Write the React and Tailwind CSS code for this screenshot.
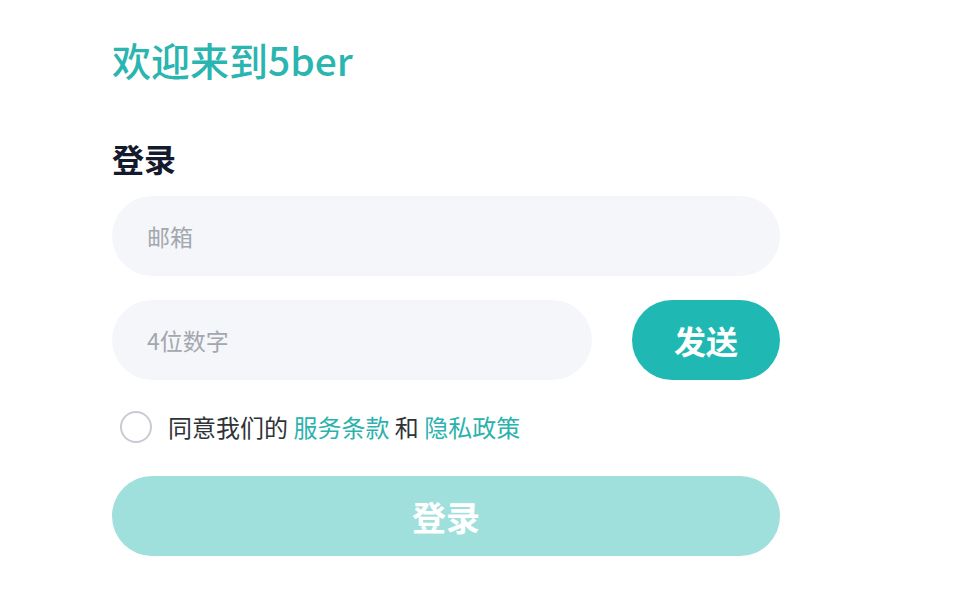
const App = () => {
  return (
    <div
      className="min-h-screen bg-white pl-[112px] pt-[35px]"
      style={{ fontFamily: '"Noto Sans CJK SC", "Noto Sans", sans-serif' }}
    >
      <div className="w-[668px]">
        <h1 className="text-[39px] leading-[48px] font-medium text-[#2ab5b0]">
          欢迎来到5ber
        </h1>

        <h2 className="mt-[55px] text-[32px] leading-[40px] font-bold text-[#141a2e]">
          登录
        </h2>

        {/* 邮箱 */}
        <input
          placeholder="邮箱"
          className="mt-[18px] block h-20 w-full rounded-full bg-[#f4f6fa] px-[35px] text-[23px] text-[#333] placeholder:text-[#a3a7ae] outline-none"
        />

        {/* 验证码 */}
        <div className="mt-6 flex items-center gap-10">
          <input
            placeholder="4位数字"
            className="block h-20 w-[480px] rounded-full bg-[#f4f6fa] px-[35px] text-[23px] text-[#333] placeholder:text-[#a3a7ae] outline-none"
          />
          <button className="h-20 flex-1 rounded-full bg-[#20b8b2] text-[32px] font-bold text-white">
            发送
          </button>
        </div>

        {/* 协议 */}
        <div className="mt-[31px] flex items-center pl-2">
          <span className="h-8 w-8 rounded-full border-2 border-[#c7cbd2]" />
          <span className="ml-4 text-[24px] leading-8 text-[#2f3338]">
            同意我们的 <span className="text-[#2bb2ad]">服务条款</span> 和{" "}
            <span className="text-[#2bb2ad]">隐私政策</span>
          </span>
        </div>

        <button className="mt-[33px] block h-20 w-full rounded-full bg-[#9fdfdc] text-[34px] font-bold text-white">
          登录
        </button>
      </div>
    </div>
  );
};

export default App;
